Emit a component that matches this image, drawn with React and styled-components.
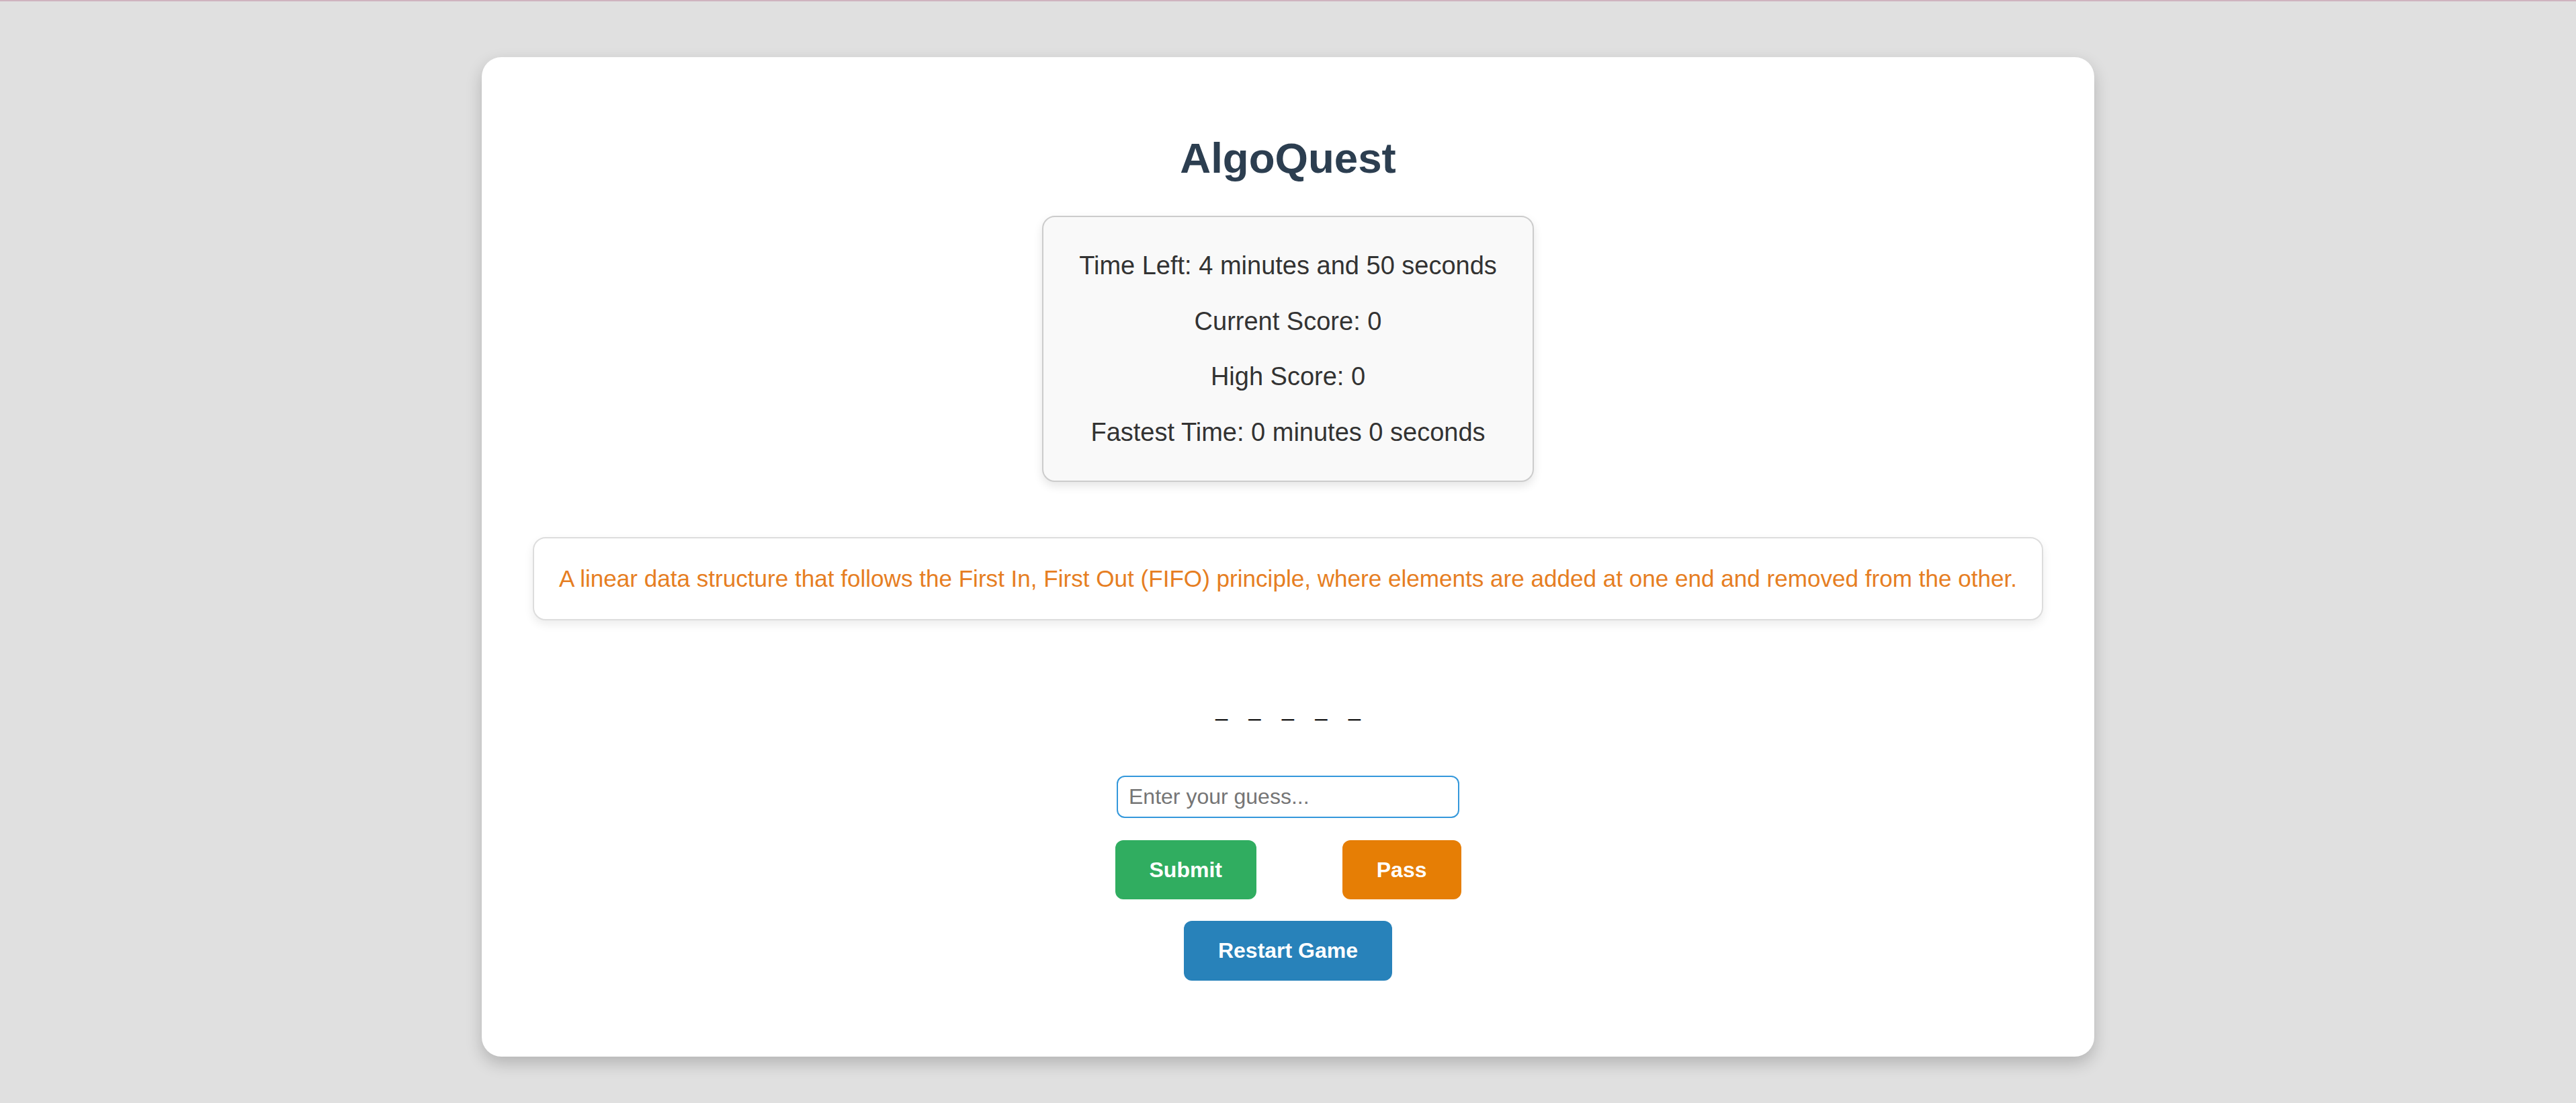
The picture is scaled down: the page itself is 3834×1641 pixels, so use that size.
import React from "react";
import styled, { createGlobalStyle } from "styled-components";

const GlobalStyle = createGlobalStyle`
  html, body {
    margin: 0;
    padding: 0;
  }
  body {
    background: #e0e0e0;
    font-family: "Liberation Sans", Arial, sans-serif;
    border-top: 2px solid #cfb3bf;
  }
`;

const Page = styled.div`
  padding: 83px 0 60px;
`;

const Card = styled.main`
  width: 2400px;
  box-sizing: border-box;
  margin: 0 auto;
  background: #ffffff;
  border-radius: 29px;
  box-shadow: 0 10px 24px rgba(0, 0, 0, 0.2);
  padding: 114px 76px 113px;
  display: flex;
  flex-direction: column;
  align-items: center;
`;

const Title = styled.h1`
  margin: 0 0 50px;
  font-size: 63.6px;
  line-height: 72px;
  font-weight: 700;
  color: #2c3e50;
`;

const Stats = styled.section`
  box-sizing: border-box;
  width: 732px;
  height: 396px;
  padding: 12px 0;
  background: #f9f9f9;
  border: 2px solid #cccccc;
  border-radius: 19px;
  box-shadow: 0 6px 14px rgba(0, 0, 0, 0.1);
  text-align: center;
`;

const StatLine = styled.p`
  margin: 38.4px 0;
  font-size: 38px;
  line-height: 44px;
  color: #333333;
`;

const Clue = styled.section`
  box-sizing: border-box;
  width: 100%;
  margin-top: 82px;
  padding: 40px 20px;
  background: #ffffff;
  border: 2px solid #dddddd;
  border-radius: 19px;
  box-shadow: 0 6px 14px rgba(0, 0, 0, 0.08);
  text-align: center;
  font-size: 35.1px;
  line-height: 40px;
  color: #e67e22;
`;

const Blanks = styled.div`
  display: flex;
  gap: 31.7px;
  margin-top: 113.5px;
  height: 37px;
`;

const Blank = styled.span`
  font-size: 32px;
  line-height: 37px;
  color: #000000;
`;

const GuessInput = styled.input`
  box-sizing: border-box;
  width: 510px;
  height: 63px;
  margin-top: 80.5px;
  padding: 0 16px;
  border: 2px solid #3498db;
  border-radius: 12px;
  outline: none;
  font-family: "Liberation Sans", Arial, sans-serif;
  font-size: 32px;
  color: #333;
  &::placeholder {
    color: #757575;
  }
`;

const ButtonRow = styled.div`
  width: 515px;
  margin-top: 33px;
  display: flex;
  justify-content: space-between;
`;

const Button = styled.button`
  box-sizing: border-box;
  height: ${(p) => p.$h || 88}px;
  padding: 0 51px;
  border: none;
  border-radius: 12px;
  background: ${(p) => p.$bg};
  color: #ffffff;
  font-family: "Liberation Sans", Arial, sans-serif;
  font-size: 32px;
  font-weight: 700;
  cursor: pointer;
`;

const RestartWrap = styled.div`
  margin-top: 32px;
`;

export default function App() {
  return (
    <>
      <GlobalStyle />
      <Page>
        <Card>
          <Title>AlgoQuest</Title>
          <Stats>
            <StatLine>Time Left: 4 minutes and 50 seconds</StatLine>
            <StatLine>Current Score: 0</StatLine>
            <StatLine>High Score: 0</StatLine>
            <StatLine>Fastest Time: 0 minutes 0 seconds</StatLine>
          </Stats>
          <Clue>
            A linear data structure that follows the First In, First Out (FIFO)
            principle, where elements are added at one end and removed from the
            other.
          </Clue>
          <Blanks>
            {[0, 1, 2, 3, 4].map((i) => (
              <Blank key={i}>_</Blank>
            ))}
          </Blanks>
          <GuessInput type="text" placeholder="Enter your guess..." />
          <ButtonRow>
            <Button $bg="#30ad60">Submit</Button>
            <Button $bg="#e67e05">Pass</Button>
          </ButtonRow>
          <RestartWrap>
            <Button $bg="#2882ba" $h={89}>
              Restart Game
            </Button>
          </RestartWrap>
        </Card>
      </Page>
    </>
  );
}
